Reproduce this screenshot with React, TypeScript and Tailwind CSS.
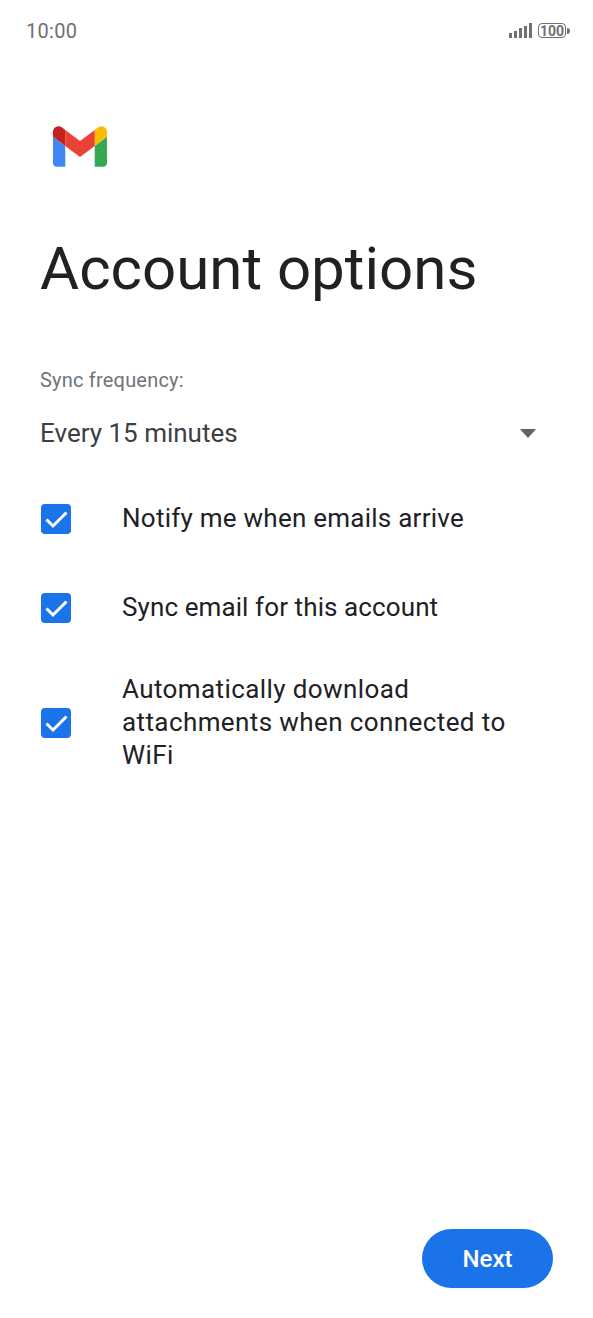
import React from 'react';

const font = { fontFamily: 'Roboto, sans-serif' };

const GmailLogo: React.FC = () => (
  <svg viewBox="52 42 88 66" className="w-[54px] h-[41px]">
    <path fill="#4285f4" d="M58 108h14V74L52 59v43c0 3.32 2.69 6 6 6" />
    <path fill="#34a853" d="M120 108h14c3.32 0 6-2.69 6-6V59l-20 15" />
    <path fill="#fbbc04" d="M120 48v26l20-15v-8c0-7.42-8.47-11.65-14.4-7.2" />
    <path fill="#ea4335" d="M72 74V48l24 18 24-18v26L96 92" />
    <path fill="#c5221f" d="M52 51v8l20 15V48l-5.6-4.2c-5.94-4.45-14.4-.22-14.4 7.2" />
  </svg>
);

const SignalBars: React.FC = () => (
  <div className="flex items-end gap-[2px] h-[15px]">
    <div className="w-[3px] h-[5px] bg-[#707070]" />
    <div className="w-[3px] h-[7px] bg-[#707070]" />
    <div className="w-[3px] h-[10px] bg-[#707070]" />
    <div className="w-[3px] h-[12px] bg-[#707070]" />
    <div className="w-[3px] h-[15px] bg-[#707070]" />
  </div>
);

const Battery: React.FC = () => (
  <div className="flex items-center">
    <div className="w-[28px] h-[15px] rounded-[4px] border-[1.5px] border-[#707070] flex items-center justify-center text-[14px] font-bold leading-none text-[#707070]">
      100
    </div>
    <div className="w-[3px] h-[6px] bg-[#707070] rounded-r-sm ml-[1px]" />
  </div>
);

const CheckRow: React.FC<{ label: React.ReactNode; className: string }> = ({ label, className }) => (
  <div className={`flex items-center ${className}`}>
    <div className="ml-[41px] w-[30px] h-[30px] rounded-[4px] bg-[#1a73e8] shrink-0">
      <svg viewBox="0 0 30 30" className="w-[30px] h-[30px]">
        <path d="M5.5 15.5l6.5 6.5L25.5 8.5" fill="none" stroke="#fff" strokeWidth="3" />
      </svg>
    </div>
    <div className="ml-[51px] text-[26px] leading-[33px] text-[#202124]">{label}</div>
  </div>
);

export default function App() {
  return (
    <div className="w-[593px] h-[1318px] bg-white flex flex-col" style={font}>
      {/* Status bar */}
      <div className="h-[61px] pl-[26px] pr-[23px] flex items-center justify-between shrink-0">
        <span className="text-[20px] tracking-[0.3px] text-[#707070]">10:00</span>
        <div className="flex items-center gap-[6px]">
          <SignalBars />
          <Battery />
        </div>
      </div>

      <div className="pl-[53px] pt-[65px]">
        <GmailLogo />
      </div>

      <h1 className="ml-[40px] mt-[66px] text-[60px] leading-[72px] text-[#202124]">Account options</h1>

      <div className="ml-[40px] mt-[63px] text-[20px] leading-[24px] tracking-[0.2px] text-[#6f7378]">Sync frequency:</div>

      <div className="mt-[25px] pl-[40px] pr-[57px] flex items-center justify-between">
        <span className="text-[26px] leading-[33px] text-[#3c4043]">Every 15 minutes</span>
        <div className="w-0 h-0 border-l-[8px] border-r-[8px] border-t-[9px] border-l-transparent border-r-transparent border-t-[#5f6368]" />
      </div>

      <CheckRow className="mt-[52px]" label={<span className="tracking-[0.25px]">Notify me when emails arrive</span>} />
      <CheckRow className="mt-[56px]" label={<span className="tracking-[0.1px]">Sync email for this account</span>} />
      <CheckRow
        className="mt-[49px]"
        label={
          <span className="tracking-[0.4px]">
            Automatically download
            <br />
            attachments when connected to
            <br />
            WiFi
          </span>
        }
      />

      <div className="mt-auto pr-[40px] pb-[30px] flex justify-end">
        <button className="w-[131px] h-[59px] rounded-full bg-[#1a73e8] text-white text-[24px] font-medium">Next</button>
      </div>
    </div>
  );
}
